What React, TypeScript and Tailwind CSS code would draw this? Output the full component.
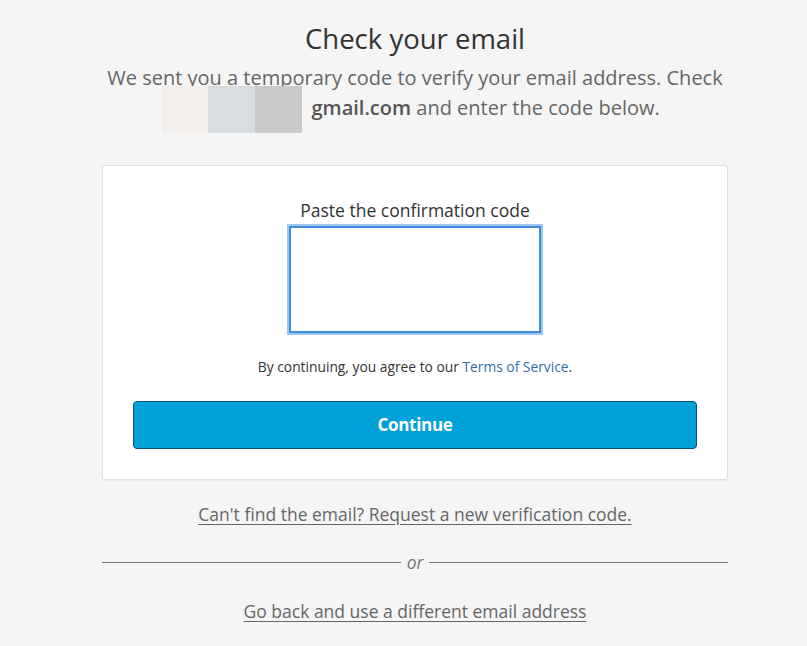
import React from "react";

export default function App() {
  return (
    <div className="min-h-[646px] w-full bg-[#f5f5f5] font-['Open_Sans',sans-serif]">
      <div className="ml-[102px] w-[626px] pt-[20px] flex flex-col items-center">
        <h1 className="text-[27.5px] leading-[38px] text-[#333] font-normal">Check your email</h1>
        <p className="mt-[5px] w-[660px] text-center text-[20px] leading-[30px] text-[#666]">
          We sent you a temporary code to verify your email address. Check{" "}
          <span className="inline-flex align-middle h-[47px] -my-[10px] -ml-[8px] mr-[4px]">
            <span className="w-[46px] h-full bg-[#f1eeec]" />
            <span className="w-[47px] h-full bg-[#d8dde1]" />
            <span className="w-[47px] h-full bg-[#cacaca]" />
          </span>{" "}
          <span className="font-semibold text-[#555]">gmail.com</span> and enter the code below.
        </p>
        <div className="mt-[42px] w-[626px] bg-white border border-[#e0e0e0] rounded-[3px] shadow-[0_1px_2px_rgba(0,0,0,0.06)] px-[30px] pt-[32px] pb-[30px] flex flex-col items-center">
          <label className="text-[17.5px] leading-[24px] text-[#333]">Paste the confirmation code</label>
          <div className="mt-[4px] w-[252px] h-[107px] border-2 border-[#3d8fdb] shadow-[0_0_0_2px_#9fc6ee] bg-white" />
          <p className="mt-[24px] text-[13.8px] leading-[20px] text-[#333]">
            By continuing, you agree to our <span className="text-[#336ea5]">Terms of Service</span>.
          </p>
          <button className="mt-[24px] w-full h-[48px] rounded-[4px] bg-[#00a0d8] border border-[#0b5470] text-white text-[17px] font-bold tracking-[-0.3px]">
            Continue
          </button>
        </div>
        <a className="mt-[22px] text-[17.5px] leading-[24px] text-[#666] underline underline-offset-[3px]">
          Can't find the email? Request a new verification code.
        </a>
        <div className="mt-[24px] w-full flex items-center gap-[6px]">
          <div className="flex-1 h-px bg-[#777]" />
          <span className="text-[17.5px] italic text-[#777] leading-[24px]">or</span>
          <div className="flex-1 h-px bg-[#777]" />
        </div>
        <a className="mt-[25px] text-[17.5px] leading-[24px] text-[#666] underline underline-offset-[3px]">
          Go back and use a different email address
        </a>
      </div>
    </div>
  );
}
